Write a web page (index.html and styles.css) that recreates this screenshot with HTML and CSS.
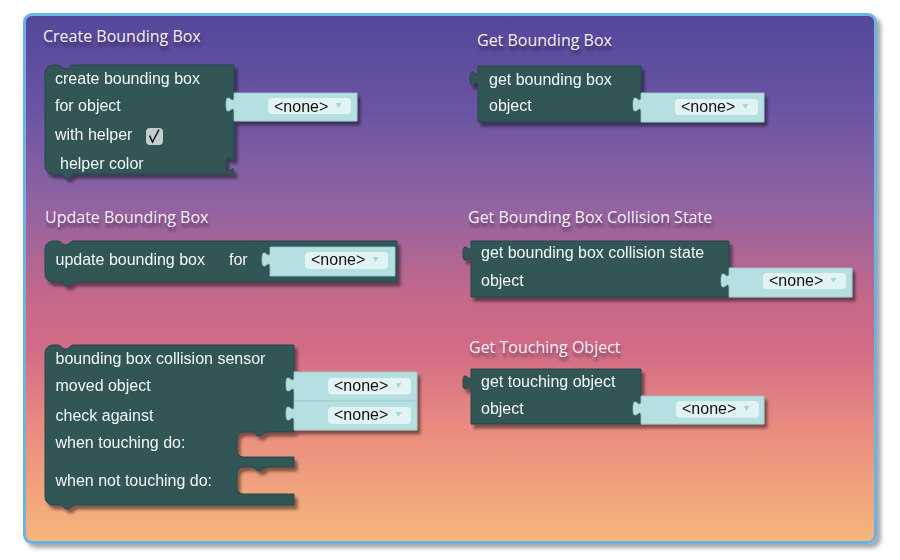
FILE: index.html
```html
<!DOCTYPE html>
<html>
<head>
<meta charset="utf-8">
<link rel="stylesheet" href="styles.css">
</head>
<body>
<div class="workspace">
  <svg class="canvas" viewBox="26 16 848 525" width="848" height="525">
    <defs>
      <filter id="sh" x="-10%" y="-10%" width="130%" height="140%">
        <feDropShadow dx="3" dy="4" stdDeviation="1.6" flood-color="#000" flood-opacity="0.45"/>
      </filter>
    </defs>

    <!-- create bounding box -->
    <g class="block">
      <path class="dark" d="M 45,73 a 8,8 0 0 1 8,-8 H 58 c 3,0 4,4 7,4 h 1 c 3,0 4,-4 7,-4 H 234 V 97 c 0,10 -8,-8 -8,7.5 s 8,-2.5 8,7.5 V 157 c 0,10 -8,-8 -8,7.5 s 8,-2.5 8,7.5 V 174 H 75 c -3,0 -4,4 -7,4 h -1 c -3,0 -4,-4 -7,-4 H 53 a 8,8 0 0 1 -8,-8 Z"/>
      <path class="light" d="M 234,93 H 357 V 121 H 234 V 112 c 0,-10 -8,8 -8,-7.5 s 8,2.5 8,-7.5 Z"/>
      <rect class="pill" x="268" y="98" width="83" height="16" rx="4"/>
      <text class="val" x="274" y="111.5">&lt;none&gt;</text>
      <polygon class="arrow" points="335.5,103 341.5,103 338.5,108"/>
      <text class="lbl" x="55" y="84">create bounding box</text>
      <text class="lbl" x="55" y="111">for object</text>
      <text class="lbl" x="55" y="140">with helper</text>
      <rect class="cb" x="146" y="128" width="17" height="17" rx="4"/>
      <polyline class="chk" points="149.5,135.5 152.5,142 159,129.5"/>
      <text class="lbl" x="60" y="169">helper color</text>
    </g>

    <!-- get bounding box -->
    <g class="block">
      <path class="dark" d="M 478,66 H 641 V 97 c 0,10 -8,-8 -8,7.5 s 8,-2.5 8,7.5 V 122 H 478 V 86 c 0,-10 -8,8 -8,-7.5 s 8,2.5 8,-7.5 Z"/>
      <path class="light" d="M 641,93 H 764 V 122 H 641 V 112 c 0,-10 -8,8 -8,-7.5 s 8,2.5 8,-7.5 Z"/>
      <rect class="pill" x="675" y="99" width="83" height="16" rx="4"/>
      <text class="val" x="681" y="111.5">&lt;none&gt;</text>
      <polygon class="arrow" points="742.5,104 748.5,104 745.5,109"/>
      <text class="lbl" x="489" y="85">get bounding box</text>
      <text class="lbl" x="489" y="111">object</text>
    </g>

    <!-- update bounding box -->
    <g class="block">
      <path class="dark" d="M 45,249 a 8,8 0 0 1 8,-8 H 58 c 3,0 4,4 7,4 h 1 c 3,0 4,-4 7,-4 H 397 V 282 H 75 c -3,0 -4,4 -7,4 h -1 c -3,0 -4,-4 -7,-4 H 53 a 8,8 0 0 1 -8,-8 Z"/>
      <path class="light" d="M 270,247 H 395 V 276 H 270 V 267 c 0,-10 -8,8 -8,-7.5 s 8,2.5 8,-7.5 Z"/>
      <rect class="pill" x="305" y="252" width="83" height="17" rx="4"/>
      <text class="val" x="311" y="265">&lt;none&gt;</text>
      <polygon class="arrow" points="372.5,257 378.5,257 375.5,262"/>
      <text class="lbl" x="55.5" y="264.5">update bounding box</text>
      <text class="lbl" x="229" y="264.5">for</text>
    </g>

    <!-- get bounding box collision state -->
    <g class="block">
      <path class="dark" d="M 471,241 H 729 V 273 c 0,10 -8,-8 -8,7.5 s 8,-2.5 8,7.5 V 297 H 471 V 261 c 0,-10 -8,8 -8,-7.5 s 8,2.5 8,-7.5 Z"/>
      <path class="light" d="M 729,268 H 852 V 297 H 729 V 288 c 0,-10 -8,8 -8,-7.5 s 8,2.5 8,-7.5 Z"/>
      <rect class="pill" x="763" y="273" width="83" height="16" rx="4"/>
      <text class="val" x="769" y="285.5">&lt;none&gt;</text>
      <polygon class="arrow" points="830.5,278 836.5,278 833.5,283"/>
      <text class="lbl" x="481" y="257.5">get bounding box collision state</text>
      <text class="lbl" x="481" y="286">object</text>
    </g>

    <!-- bounding box collision sensor -->
    <g class="block">
      <path class="dark" d="M 45,353 a 8,8 0 0 1 8,-8 H 58 c 3,0 4,4 7,4 h 1 c 3,0 4,-4 7,-4 H 294 V 377 c 0,10 -8,-8 -8,7.5 s 8,-2.5 8,7.5 V 406 c 0,10 -8,-8 -8,7.5 s 8,-2.5 8,7.5 V 432 H 267 c -3,0 -4,4 -7,4 h -1 c -3,0 -4,-4 -7,-4 H 243 a 6,6 0 0 0 -6,6 V 451 a 6,6 0 0 0 6,6 H 294 V 467 H 267 c -3,0 -4,4 -7,4 h -1 c -3,0 -4,-4 -7,-4 H 243 a 6,6 0 0 0 -6,6 V 488 a 6,6 0 0 0 6,6 H 294 V 505 H 75 c -3,0 -4,4 -7,4 h -1 c -3,0 -4,-4 -7,-4 H 53 a 8,8 0 0 1 -8,-8 Z"/>
      <path class="light" d="M 294,372 H 417 V 401 H 294 V 392 c 0,-10 -8,8 -8,-7.5 s 8,2.5 8,-7.5 Z"/>
      <path class="light" d="M 294,401 H 417 V 430 H 294 V 421 c 0,-10 -8,8 -8,-7.5 s 8,2.5 8,-7.5 Z"/>
      <rect class="pill" x="328" y="378" width="83" height="16.5" rx="4"/>
      <text class="val" x="334" y="390.5">&lt;none&gt;</text>
      <polygon class="arrow" points="395.5,383 401.5,383 398.5,388"/>
      <rect class="pill" x="328" y="407" width="83" height="17" rx="4"/>
      <text class="val" x="334" y="420">&lt;none&gt;</text>
      <polygon class="arrow" points="395.5,412 401.5,412 398.5,417"/>
      <text class="lbl" x="55.5" y="364">bounding box collision sensor</text>
      <text class="lbl" x="55.5" y="391">moved object</text>
      <text class="lbl" x="55.5" y="420.5">check against</text>
      <text class="lbl" x="55.5" y="448">when touching do:</text>
      <text class="lbl" x="55.5" y="486">when not touching do:</text>
    </g>

    <!-- get touching object -->
    <g class="block">
      <path class="dark" d="M 471,369 H 641 V 401 c 0,10 -8,-8 -8,7.5 s 8,-2.5 8,7.5 V 424 H 471 V 390 c 0,-10 -8,8 -8,-7.5 s 8,2.5 8,-7.5 Z"/>
      <path class="light" d="M 641,396 H 764 V 424 H 641 V 416 c 0,-10 -8,8 -8,-7.5 s 8,2.5 8,-7.5 Z"/>
      <rect class="pill" x="676" y="401" width="83" height="16.5" rx="4"/>
      <text class="val" x="682" y="414">&lt;none&gt;</text>
      <polygon class="arrow" points="743.5,406 749.5,406 746.5,411"/>
      <text class="lbl" x="481" y="387">get touching object</text>
      <text class="lbl" x="481" y="413.5">object</text>
    </g>
  </svg>

  <div class="title t1">Create Bounding Box</div>
  <div class="title t2">Get Bounding Box</div>
  <div class="title t3">Update Bounding Box</div>
  <div class="title t4">Get Bounding Box Collision State</div>
  <div class="title t5">Get Touching Object</div>
</div>
</body>
</html>
```
FILE: styles.css
```css
html, body {
  margin: 0;
  padding: 0;
  background: #ffffff;
}

body {
  width: 900px;
  height: 560px;
  overflow: hidden;
}

.workspace {
  position: relative;
  margin: 13px 0 0 23px;
  width: 848px;
  height: 525px;
  border: 3px solid #69b4e5;
  border-radius: 9px;
  box-shadow: 4px 4px 4px rgba(0, 0, 0, 0.35);
  background: linear-gradient(180deg,
    #54479b 0%,
    #6a55a2 18%,
    #8e63a3 35%,
    #c56889 54%,
    #d16b86 63%,
    #eb8f7f 80%,
    #f6b67c 100%);
}

.canvas {
  position: absolute;
  left: 0;
  top: 0;
  display: block;
}

.block {
  filter: url(#sh);
}

.dark {
  fill: #315555;
  stroke: #25474a;
  stroke-width: 1;
}

.light {
  fill: #b5dfe0;
  stroke: #98c9cb;
  stroke-width: 0.8;
}

.pill {
  fill: #e2f3f3;
}

.arrow {
  fill: #a6d6d8;
}

.lbl,
.val {
  font-family: "Liberation Sans", Arial, sans-serif;
  font-size: 16px;
}

.lbl {
  fill: #f4f7f7;
}

.val {
  fill: #111111;
}

.cb {
  fill: #c6cdcd;
}

.chk {
  fill: none;
  stroke: #151515;
  stroke-width: 1.5;
}

.title {
  position: absolute;
  font-family: "Open Sans", sans-serif;
  font-size: 16px;
  line-height: 20px;
  color: #f5f0f8;
  white-space: nowrap;
  text-shadow: 1px 4px 3px rgba(30, 15, 50, 0.5);
}

.t1 { left: 17px; top: 10px; }
.t2 { left: 451px; top: 14px; }
.t3 { left: 19px; top: 191px; }
.t4 { left: 442px; top: 191px; }
.t5 { left: 443px; top: 321px; }
```
